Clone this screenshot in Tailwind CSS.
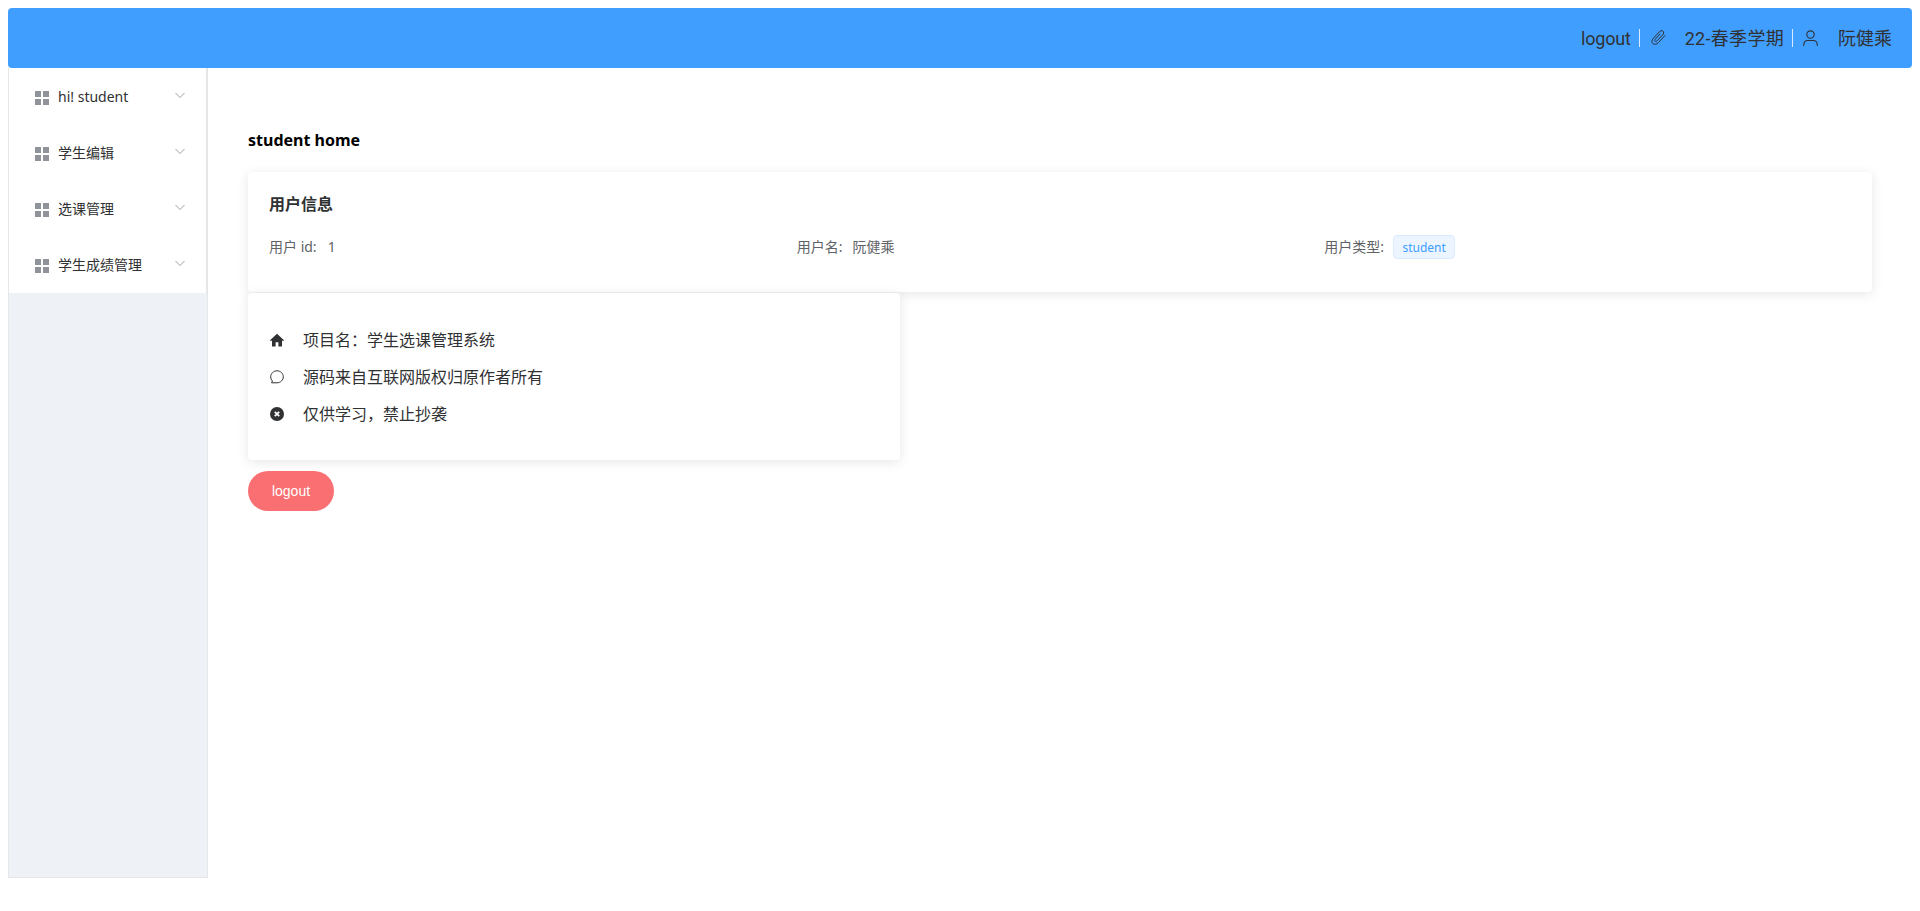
<!DOCTYPE html>
<html lang="zh-CN">
<head>
  <meta charset="UTF-8" />
  <meta name="viewport" content="width=device-width, initial-scale=1.0" />
  <title>student home</title>
  <script src="https://cdn.jsdelivr.net/npm/@tailwindcss/browser@4"></script>
</head>
<body class="bg-white p-2 h-[911px] overflow-hidden font-['Noto_Sans','Noto_Sans_CJK_SC',sans-serif] text-[#303133]">
  <!-- header -->
  <header class="h-[60px] bg-[#409eff] rounded-[4px] flex items-center justify-end pr-[20px] text-[18px] text-[#303133] font-['Roboto','Noto_Sans_CJK_SC',sans-serif]">
    <span class="tracking-[-0.2px]">logout</span>
    <span class="w-px h-[18px] bg-white/80 ml-[8px] mr-[10px]"></span>
    <svg class="w-[16px] h-[16px] mr-[19px]" viewBox="0 0 16 16" fill="none" stroke="#303133" stroke-width="1" stroke-linecap="round" stroke-linejoin="round"><path d="M15 5.500 8.400 12.600c-1.700 1.800-4 2.300-5.500 1s-1.200-3.600.5-5.400l5.900-6.400c1.100-1.200 2.700-1.500 3.700-.6s.8 2.500-.3 3.700L7 10.800c-.6.700-1.500.9-2 .4s-.4-1.300.2-2l4.900-5.300"/></svg>
    <span class="tracking-[0.3px]">22-春季学期</span>
    <span class="w-px h-[18px] bg-white/80 ml-[8px] mr-[10px]"></span>
    <svg class="w-[15px] h-[16px] mr-[20px]" viewBox="0 0 15 16" fill="none" stroke="#303133" stroke-width="1.100" stroke-linecap="round"><circle cx="7.500" cy="4.600" r="3.700"/><path d="M.7 15.500c0-3.400 1.800-5 3.900-5h5.800c2.100 0 3.900 1.600 3.900 5"/></svg>
    <span>阮健乘</span>
  </header>

  <div class="flex h-[810px]">
    <!-- sidebar -->
    <aside class="w-[200px] shrink-0 bg-[#eef1f6] border border-t-0 border-[#e6e6e6]">
      <nav class="bg-white border-r border-[#e6e6e6] text-[14px] pb-px">
        <div class="h-[56px] flex items-center pl-[26px] pr-[20px]">
          <span class="grid grid-cols-2 gap-[2px] w-[14px] mr-[9px] mt-[4px]"><i class="h-[6px] bg-[#909399]"></i><i class="h-[6px] bg-[#909399]"></i><i class="h-[6px] bg-[#909399]"></i><i class="h-[6px] bg-[#909399]"></i></span>
          <span class="flex-1">hi! student</span>
          <svg class="w-[12px] h-[12px] -mt-[3px]" viewBox="0 0 12 12" fill="none" stroke="#909399" stroke-width="0.9"><path d="M1.500 4 6 8.500 10.500 4"/></svg>
        </div>
        <div class="h-[56px] flex items-center pl-[26px] pr-[20px]">
          <span class="grid grid-cols-2 gap-[2px] w-[14px] mr-[9px] mt-[4px]"><i class="h-[6px] bg-[#909399]"></i><i class="h-[6px] bg-[#909399]"></i><i class="h-[6px] bg-[#909399]"></i><i class="h-[6px] bg-[#909399]"></i></span>
          <span class="flex-1">学生编辑</span>
          <svg class="w-[12px] h-[12px] -mt-[3px]" viewBox="0 0 12 12" fill="none" stroke="#909399" stroke-width="0.9"><path d="M1.500 4 6 8.500 10.500 4"/></svg>
        </div>
        <div class="h-[56px] flex items-center pl-[26px] pr-[20px]">
          <span class="grid grid-cols-2 gap-[2px] w-[14px] mr-[9px] mt-[4px]"><i class="h-[6px] bg-[#909399]"></i><i class="h-[6px] bg-[#909399]"></i><i class="h-[6px] bg-[#909399]"></i><i class="h-[6px] bg-[#909399]"></i></span>
          <span class="flex-1">选课管理</span>
          <svg class="w-[12px] h-[12px] -mt-[3px]" viewBox="0 0 12 12" fill="none" stroke="#909399" stroke-width="0.9"><path d="M1.500 4 6 8.500 10.500 4"/></svg>
        </div>
        <div class="h-[56px] flex items-center pl-[26px] pr-[20px]">
          <span class="grid grid-cols-2 gap-[2px] w-[14px] mr-[9px] mt-[4px]"><i class="h-[6px] bg-[#909399]"></i><i class="h-[6px] bg-[#909399]"></i><i class="h-[6px] bg-[#909399]"></i><i class="h-[6px] bg-[#909399]"></i></span>
          <span class="flex-1">学生成绩管理</span>
          <svg class="w-[12px] h-[12px] -mt-[3px]" viewBox="0 0 12 12" fill="none" stroke="#909399" stroke-width="0.9"><path d="M1.500 4 6 8.500 10.500 4"/></svg>
        </div>
      </nav>
    </aside>

    <!-- main -->
    <main class="flex-1 pl-[40px] pr-[40px] pt-[60px]">
      <h2 class="text-[16px] leading-[24px] font-bold text-black mb-[20px]">student home</h2>

      <section class="h-[120px] rounded-[4px] bg-white shadow-[0_2px_12px_0_rgba(0,0,0,0.1)] pl-[21px] pr-[20px] py-[20px]">
        <div class="text-[16px] leading-[24px] font-bold">用户信息</div>
        <div class="grid grid-cols-3 mt-[19px] text-[14px] text-[#606266] h-[24px] items-center">
          <div class="-mt-[2px]">用户 id:<span class="ml-[11px]">1</span></div>
          <div class="-mt-[2px]">用户名:<span class="ml-[10px]">阮健乘</span></div>
          <div class="flex items-center">
            <span class="-mt-[2px]">用户类型:</span>
            <span class="ml-[9px] h-[24px] w-[62px] pt-px flex items-center justify-center rounded-[4px] bg-[#ecf5ff] border border-[#d9ecff] text-[12px] text-[#409eff]">student</span>
          </div>
        </div>
      </section>

      <section class="w-[652px] h-[167px] mt-px rounded-[4px] bg-white shadow-[0_2px_12px_0_rgba(0,0,0,0.1)] pl-[22px] pr-[20px] pt-[28px] text-[16px]">
        <div class="h-[37px] flex items-center">
          <svg class="w-[14px] h-[14px] mr-[19px]" viewBox="0 0 14 14" fill="#303133"><path d="M7 .8 0 7.200l1 1 1-.9V13.500h3.600V9.200h2.800v4.300H12V7.300l1 .9 1-1z"/></svg>
          <span>项目名&#xFF1A;学生选课管理系统</span>
        </div>
        <div class="h-[37px] flex items-center">
          <svg class="w-[14px] h-[14px] mr-[19px]" viewBox="0 0 14 14" fill="none" stroke="#303133" stroke-width="1"><path d="M7 .8c3.500 0 6.300 2.700 6.300 6s-2.800 6-6.300 6H1.500l1-1.800C1.300 9.900.7 8.500.7 6.800.7 3.500 3.500.8 7 .8z"/></svg>
          <span>源码来自互联网版权归原作者所有</span>
        </div>
        <div class="h-[37px] flex items-center">
          <svg class="w-[14px] h-[14px] mr-[19px]" viewBox="0 0 14 14"><circle cx="7" cy="7" r="7" fill="#303133"/><path d="M4.800 4.800l4.400 4.400M9.200 4.800l-4.400 4.400" stroke="#fff" stroke-width="1.800"/></svg>
          <span>仅供学习&#xFF0C;禁止抄袭</span>
        </div>
      </section>

      <button class="block mt-[11px] h-[40px] w-[86px] rounded-[20px] bg-[#f96f72] text-white text-[14px] font-['Liberation_Sans',sans-serif]">logout</button>
    </main>
  </div>
</body>
</html>
